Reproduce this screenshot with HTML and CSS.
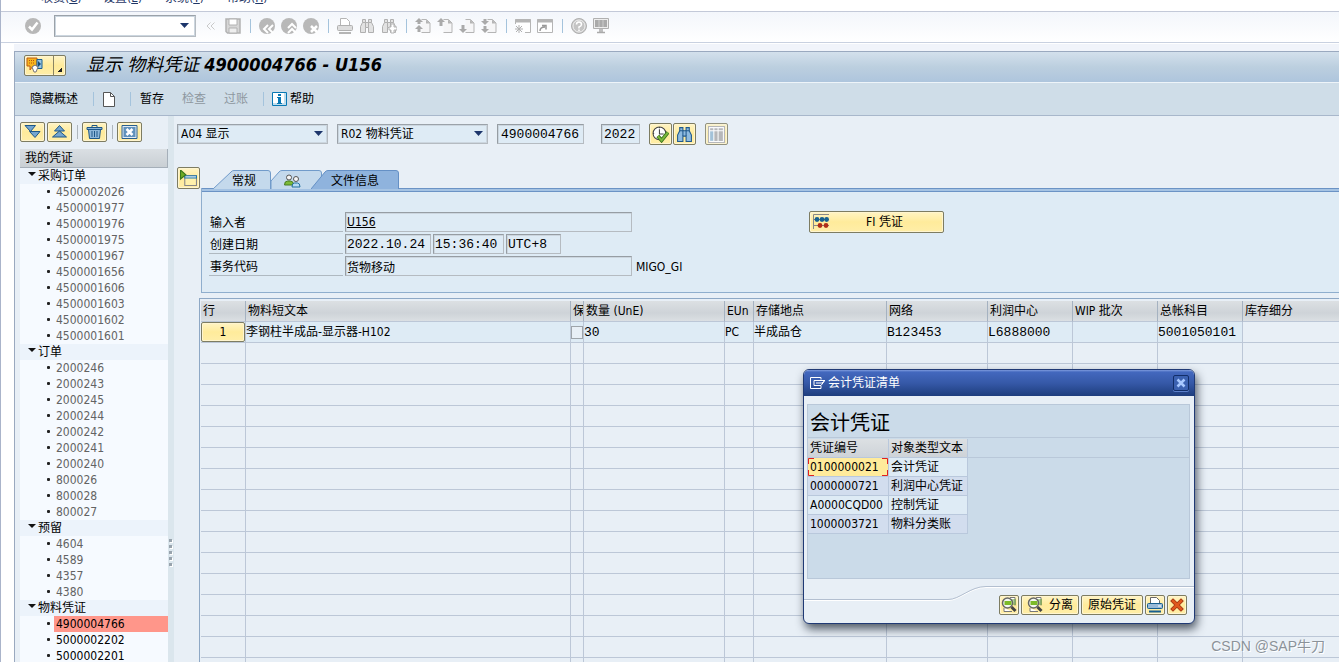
FILE: index.html
```html
<!DOCTYPE html>
<html lang="zh-CN">
<head>
<meta charset="utf-8">
<title>显示 物料凭证 4900004766 - U156</title>
<link rel="stylesheet" href="styles.css">
</head>
<body>
<svg class="sprite" aria-hidden="true">
  <symbol id="i-page" viewBox="0 0 16 16"><path d="M6.5 1.500h5l3.500 3.500v9.500h-8.500" fill="#f6f6f7" stroke="#b5b5b5"/><path d="M11 1.500v4h4z" fill="#b5b5b5"/></symbol>
  <symbol id="i-binoc" viewBox="0 0 16 16"><path d="M3.500 1.500h3v3h3v-3h3v3l2 4v6h-5v-5h-3v5h-5v-6l2-4z" fill="currentColor" stroke="var(--line)"/><path d="M3.500 4.500h3v5M12.500 4.500h-3v5" fill="none" stroke="var(--line)"/></symbol>
  <symbol id="i-lens" viewBox="0 0 16 16"><path d="M9 .5h5v8M3 11v3.500h8" fill="#fff" stroke="#777"/><path d="M10 3h5M10 5h5M10 7h5" stroke="#5b9b2b"/><circle cx="6.500" cy="6" r="5" fill="#f4f8f0" stroke="#666" stroke-width="1.500"/><path d="M3.500 4h7v4h-7z" fill="#7cba28"/><path d="M10.500 10l4 4" stroke="#444" stroke-width="3"/></symbol>
</svg>
<div class="frame">
<nav class="menu"><a href="#">收货(<u>G</u>)</a><a href="#">设置(<u>E</u>)</a><a href="#">系统(<u>Y</u>)</a><a href="#">帮助(<u>H</u>)</a></nav>
<div class="toolbar">
  <button class="tool ok" aria-label="确认"><svg viewBox="0 0 16 16"><circle cx="8" cy="8" r="8" fill="#b8b8b8"/><path d="M4 8.500l3 3 5.500-7" fill="none" stroke="#fff" stroke-width="2.500"/></svg></button>
  <div class="combo command"><input type="text" aria-label="命令"><svg class="arrow" viewBox="0 0 9 5"><path d="M0 0h9L4.500 5z"/></svg></div>
  <button class="tool" aria-label="折叠"><svg viewBox="0 0 16 16"><path d="M7.500 4.500L4 8l3.500 3.500M11.500 4.500L8 8l3.500 3.500" fill="none" stroke="#c9c9c9"/></svg></button>
  <button class="tool" aria-label="保存"><svg viewBox="0 0 16 16"><path d="M1 1h14v14H2.500L1 13.500z" fill="#d6d6d6" stroke="#b2b2b2" stroke-width="1.500"/><path d="M4 1h8v6H4z" fill="#fff" stroke="#b2b2b2"/><path d="M4 10h8v5H4z" fill="#eee" stroke="#b2b2b2"/></svg></button>
  <i class="sep"></i>
  <button class="tool" aria-label="返回"><svg viewBox="0 0 16 16"><circle cx="8" cy="8" r="8" fill="#b8b8b8"/><path d="M9 7l-4 4 4 4M14 7l-4 4 4 4" fill="none" stroke="#fff" stroke-width="2"/></svg></button>
  <button class="tool" aria-label="退出"><svg viewBox="0 0 16 16"><circle cx="8" cy="8" r="8" fill="#b8b8b8"/><path d="M7 10l4-4 4 4M7 15l4-4 4 4" fill="none" stroke="#fff" stroke-width="2"/></svg></button>
  <button class="tool" aria-label="取消"><svg viewBox="0 0 16 16"><circle cx="8" cy="8" r="8" fill="#b8b8b8"/><path d="M8 8l6 6M14 8l-6 6" stroke="#fff" stroke-width="2.500"/></svg></button>
  <i class="sep"></i>
  <button class="tool" aria-label="打印"><svg viewBox="0 0 16 16"><path d="M3.500 7V.5h6l3 3V7" fill="#fff" stroke="#b5b5b5"/><rect x=".5" y="7.500" width="15" height="5" rx="1" fill="#ddd" stroke="#b0b0b0"/><path d="M2 15h12" stroke="#b5b5b5" stroke-width="2"/></svg></button>
  <button class="tool find" aria-label="查找"><svg><use href="#i-binoc"/></svg></button>
  <button class="tool find" aria-label="继续查找"><svg viewBox="0 0 16 16"><use href="#i-binoc"/><path d="M10 6h3v3h3v3h-3v3h-3v-3H8V9h2z" fill="#fff" stroke="#b5b5b5"/></svg></button>
  <i class="sep"></i>
  <button class="tool" aria-label="第一页"><svg viewBox="0 0 16 16"><use href="#i-page"/><path d="M4 0l4 4H5.500v2H2.500V4H0zM4 7l4 4H5.500v3H2.500v-3H0z" fill="#aaa"/></svg></button>
  <button class="tool" aria-label="上一页"><svg viewBox="0 0 16 16"><use href="#i-page"/><path d="M4 0l4 4H5.500v4H2.500V4H0z" fill="#aaa"/></svg></button>
  <button class="tool" aria-label="下一页"><svg viewBox="0 0 16 16"><use href="#i-page"/><path d="M2.500 7h3v4H8l-4 4-4-4h2.500z" fill="#aaa"/></svg></button>
  <button class="tool" aria-label="最后一页"><svg viewBox="0 0 16 16"><use href="#i-page"/><path d="M2.500 1h3v2H8L4 7 0 3h2.500zM2.500 8h3v3H8l-4 4-4-4h2.500z" fill="#aaa"/></svg></button>
  <i class="sep"></i>
  <button class="tool" aria-label="新建会话"><svg viewBox="0 0 16 16"><path d="M.5 6V1.500h15v13H10" fill="#fff" stroke="#b5b5b5"/><path d="M0 3h16" stroke="#b5b5b5" stroke-width="3"/><path d="M4 7v8M0 11h8M1 8l6 6M7 8l-6 6" stroke="#b0b0b0"/></svg></button>
  <button class="tool" aria-label="创建快捷方式"><svg viewBox="0 0 16 16"><path d="M.5 1.500h15v13H.5z" fill="#fff" stroke="#b5b5b5"/><path d="M0 3h16" stroke="#b5b5b5" stroke-width="3"/><path d="M3 13q0-4 5-4M5 7.500h4v4" fill="none" stroke="#999" stroke-width="1.500"/></svg></button>
  <i class="sep"></i>
  <button class="tool" aria-label="帮助"><svg viewBox="0 0 16 16"><circle cx="8" cy="8" r="7.500" fill="#c4c4c4" stroke="#b0b0b0"/><circle cx="8" cy="8" r="6" fill="none" stroke="#eee"/><path d="M5.500 6.500Q5.500 4 8 4t2.500 2.500Q10.500 8 8 9v1.500M8 11.500V13" fill="none" stroke="#fff" stroke-width="1.500"/></svg></button>
  <button class="tool" aria-label="定制布局"><svg viewBox="0 0 16 16"><path d="M.5.5h15v10H.5z" fill="#eee" stroke="#b0b0b0"/><path d="M2 2h12v7H2z" fill="#aaa"/><path d="M6 2v7M10 2v7" stroke="#ccc"/><path d="M7 11v3M9 11v3M4 14.500h8" stroke="#aaa" stroke-width="1.500"/></svg></button>
</div>
<div class="window">
  <header class="title">
    <button class="gold services" aria-label="对象服务"><svg viewBox="0 0 18 16"><path d="M1 1h10v8H7l-3 4V9H1z" fill="#f7b51d" stroke="#bd5b17"/><path d="M3 3.500h6M3 6h6" stroke="#b4530f" stroke-dasharray="1 1"/><path d="M11 2.500h5v9h-5z" fill="#9bc5e1" stroke="#195f93"/><path d="M12 4l3 3-3 3z" fill="#164c79"/><path d="M6 10l3-2 3 2-2 5H8z" fill="#fff" stroke="#777"/></svg><span class="drop"></span></button>
    <h1>显示 物料凭证 <b>4900004766 - U156</b></h1>
  </header>
  <div class="appbar">
    <button class="flat">隐藏概述</button><i class="sep"></i>
    <button class="flat" aria-label="新建"><svg width="12" height="15" viewBox="0 0 12 15"><path d="M.5.500h7l4 4v10H.5z" fill="#fff" stroke="#555"/><path d="M7.500.500v4h4" fill="none" stroke="#555"/></svg></button><i class="sep"></i>
    <button class="flat hold">暂存</button><button class="flat" disabled>检查</button><button class="flat" disabled>过账</button><i class="sep"></i>
    <button class="flat help"><svg width="15" height="14" viewBox="0 0 15 14"><path d="M.5.500h14v13H.5z" fill="#fff" stroke="#0878b4"/><path d="M12 1h2v12H1v-2h11z" fill="#0878b4" opacity=".25"/><path d="M6 2h3v2H6zM5 5h4v6h1v1H5v-1h1V6H5z" fill="#0878b4"/></svg>帮助</button>
  </div>
  <div class="work">
    <aside class="side">
      <div class="sidebar-tools">
        <button class="gold" aria-label="全部展开"><svg viewBox="0 0 16 14"><path d="M.5.500h10.500l-5 6zM5 6.500h10.500l-5 6z" fill="#74a5cf" stroke="#1d5788"/></svg></button>
        <button class="gold" aria-label="全部折叠"><svg viewBox="0 0 16 14"><path d="M8 .500l5 5.500H3zM8 6l7 6H1z" fill="#74a5cf" stroke="#1d5788"/></svg></button>
        <i class="sep"></i>
        <button class="gold" aria-label="删除"><svg viewBox="0 0 16 14"><path d="M5.500 2V.5h5V2" fill="none" stroke="#1d5788"/><path d="M.5 2.500h15v2H.5zM2 4.500h12l-1 9H3z" fill="#8db7da" stroke="#1d5788"/><path d="M5.500 6v6M8 6v6M10.500 6v6" stroke="#1d5788"/></svg></button>
        <i class="sep"></i>
        <button class="gold" aria-label="关闭概述"><svg viewBox="0 0 16 14"><path d="M.5.500h15v13H.5z" fill="#e0ebf3" stroke="#285f8e"/><path d="M2 2h12v10H2z" fill="#5f91bc"/><path d="M5 4l6 6M11 4l-6 6" stroke="#fff" stroke-width="2.500"/></svg></button>
      </div>
      <h2 class="tree-head">我的凭证</h2>
      <ul class="tree">
        <li><span class="group">采购订单</span><ul><li><a href="#">4500002026</a></li><li><a href="#">4500001977</a></li><li><a href="#">4500001976</a></li><li><a href="#">4500001975</a></li><li><a href="#">4500001967</a></li><li><a href="#">4500001656</a></li><li><a href="#">4500001606</a></li><li><a href="#">4500001603</a></li><li><a href="#">4500001602</a></li><li><a href="#">4500001601</a></li></ul></li>
        <li><span class="group">订单</span><ul><li><a href="#">2000246</a></li><li><a href="#">2000243</a></li><li><a href="#">2000245</a></li><li><a href="#">2000244</a></li><li><a href="#">2000242</a></li><li><a href="#">2000241</a></li><li><a href="#">2000240</a></li><li><a href="#">800026</a></li><li><a href="#">800028</a></li><li><a href="#">800027</a></li></ul></li>
        <li><span class="group">预留</span><ul><li><a href="#">4604</a></li><li><a href="#">4589</a></li><li><a href="#">4357</a></li><li><a href="#">4380</a></li></ul></li>
        <li><span class="group">物料凭证</span><ul class="active"><li><a href="#" class="current">4900004766</a></li><li><a href="#">5000002202</a></li><li><a href="#">5000002201</a></li></ul></li>
      </ul>
    </aside>
    <div class="splitter"><i></i><i></i><i></i><i></i><i></i></div>
    <main>
      <div class="query">
        <div class="combo"><select aria-label="操作"><option>A04 显示</option></select><svg class="arrow" viewBox="0 0 9 5"><path d="M0 0h9L4.500 5z"/></svg></div>
        <div class="combo"><select aria-label="参考凭证"><option>R02 物料凭证</option></select><svg class="arrow" viewBox="0 0 9 5"><path d="M0 0h9L4.500 5z"/></svg></div>
        <input class="field mono number" aria-label="凭证编号" value="4900004766">
        <input class="field mono year" aria-label="年度" value="2022">
        <div class="query-tools">
        <button class="gold sq" aria-label="执行"><svg viewBox="0 0 16 16"><circle cx="7" cy="7" r="6" fill="#fff" stroke="#444"/><path d="M7 3v4.500h4M7 1v1M1 7h1M7 12v1" fill="none" stroke="#444"/><path d="M5.500 9.500l3.500 4 6-7.500" fill="none" stroke="#366d1b" stroke-width="3.500"/><path d="M5.500 9.500l3.500 4 6-7.500" fill="none" stroke="#7ab83a" stroke-width="2"/></svg></button>
        <button class="gold sq blue" aria-label="查找"><svg><use href="#i-binoc"/></svg></button>
        <button class="gold sq last" aria-label="布局"><svg viewBox="0 0 16 16"><path d="M.5.500h15v15H.5z" fill="#fff" stroke="#aaa"/><path d="M2 2h3v2H2zM6 2h3v2H6zM10 2h4v2h-4zM6 5h3v9H6zM10 5h4v9h-4z" fill="#aaa"/><path d="M2 5h3v9H2z" fill="#92b7d1"/></svg></button>
        </div>
      </div>
      <div class="detail">
        <button class="gold sq toggle" aria-label="明细"><svg viewBox="0 0 16 16"><path d="M4.500 5.500h11v9h-11z" fill="#fff1ab" stroke="#888"/><path d="M4 5h12v3H4z" fill="#1b74ab"/><path d="M5 6.500h10" stroke="#fff"/><path d="M.5 0l5 4.500-5 4z" fill="#6dac23" stroke="#39761b"/></svg></button>
        <section class="tabbox">
          <div class="tabs" role="tablist">
            <button role="tab" class="tab general"><svg viewBox="0 0 58 19"><path d="M0 19L18 2q1-1.500 3-1.500h34q2.500 0 2.500 2.500v16" fill="#c4d9ec" stroke="#719bca"/></svg><span>常规</span></button>
            <button role="tab" class="tab people" aria-label="业务伙伴"><svg viewBox="0 0 51 19"><path d="M0 19v-8l8-9q1-1.500 3-1.500h37q2.500 0 2.500 2.500v16" fill="#c4d9ec" stroke="#719bca"/></svg><span><svg width="17" height="14" viewBox="0 0 17 14"><circle cx="5" cy="3.500" r="2.500" fill="#f5f5f5" stroke="#555"/><path d="M.5 11q0-4 3-4h3q3 0 3 4z" fill="#7dbb38" stroke="#477c22"/><circle cx="12" cy="5" r="2.500" fill="#f5f5f5" stroke="#555"/><path d="M8 13q0-4 2.500-4h3q2.500 0 2.500 4z" fill="#b7dcf4" stroke="#22709f"/></svg></span></button>
            <button role="tab" class="tab doc" aria-selected="true"><svg viewBox="0 0 88 19"><path d="M0 19L14 2q1-1.500 3-1.500h68q2.500 0 2.500 2.500v16" fill="#8fb3dd" stroke="#6590c5"/></svg><span>文件信息</span></button>
          </div>
          <div class="panel">
            <div class="form">
              <div class="row"><label for="user">输入者</label><input id="user" class="field wide user" value="U156"></div>
              <div class="row"><label for="date">创建日期</label><input id="date" class="field mono date" value="2022.10.24"><input class="field mono time" aria-label="时间" value="15:36:40"><input class="field mono zone" aria-label="时区" value="UTC+8"></div>
              <div class="row"><label for="tcode">事务代码</label><input id="tcode" class="field wide" value="货物移动"><span class="code">MIGO_GI</span></div>
            </div>
            <button class="gold fi"><svg width="16" height="16" viewBox="0 0 16 16"><path d="M.5 15V.5H16M1 5.500h15M1 11.500h15" fill="none" stroke="#888"/><g fill="#16608f"><circle cx="4" cy="5.500" r="2.400"/><circle cx="9" cy="5.500" r="2.400"/><circle cx="13.600" cy="5.500" r="2.400"/></g><g fill="#b02f18"><circle cx="7" cy="11.500" r="2.400"/><circle cx="13" cy="11.500" r="2.400"/></g></svg><span>FI 凭证</span></button>
          </div>
        </section>
      </div>
      <div class="grid">
        <table>
          <colgroup><col class="w45"><col class="w325"><col class="w13"><col class="w141"><col class="w29"><col class="w133"><col class="w101"><col class="w85"><col class="w85"><col class="w85"><col></colgroup>
          <thead><tr><th>行</th><th>物料短文本</th><th>保</th><th>数量 (UnE)</th><th>EUn</th><th>存储地点</th><th>网络</th><th>利润中心</th><th>WIP 批次</th><th>总帐科目</th><th>库存细分</th></tr></thead>
          <tbody>
          <tr class="filled"><td><button class="gold line">1</button></td><td>李钢柱半成品-显示器-H102</td><td><input type="checkbox" aria-label="保留"></td><td class="mono">30</td><td>PC</td><td>半成品仓</td><td class="mono">B123453</td><td class="mono">L6888000</td><td></td><td class="mono">5001050101</td><td></td></tr>
          <tr><td><td><td><td><td><td><td><td><td><td><td></tr>
          <tr><td><td><td><td><td><td><td><td><td><td><td></tr>
          <tr><td><td><td><td><td><td><td><td><td><td><td></tr>
          <tr><td><td><td><td><td><td><td><td><td><td><td></tr>
          <tr><td><td><td><td><td><td><td><td><td><td><td></tr>
          <tr><td><td><td><td><td><td><td><td><td><td><td></tr>
          <tr><td><td><td><td><td><td><td><td><td><td><td></tr>
          <tr><td><td><td><td><td><td><td><td><td><td><td></tr>
          <tr><td><td><td><td><td><td><td><td><td><td><td></tr>
          <tr><td><td><td><td><td><td><td><td><td><td><td></tr>
          <tr><td><td><td><td><td><td><td><td><td><td><td></tr>
          <tr><td><td><td><td><td><td><td><td><td><td><td></tr>
          <tr><td><td><td><td><td><td><td><td><td><td><td></tr>
          <tr><td><td><td><td><td><td><td><td><td><td><td></tr>
          <tr><td><td><td><td><td><td><td><td><td><td><td></tr>
          <tr><td><td><td><td><td><td><td><td><td><td><td></tr>
          </tbody>
        </table>
      </div>
    </main>
  </div>
</div>
</div>
<section class="dialog" role="dialog" aria-labelledby="dlg">
  <header><svg width="16" height="12" viewBox="0 0 16 12"><path d="M11 .5H.5v11H11V9M11 .500v2M4 3.500h11L12 6h-3M4 3.500v5h7l3-4M6 6h3" fill="none" stroke="#fff"/></svg><h2 id="dlg">会计凭证清单</h2><button class="close" aria-label="关闭"><svg width="10" height="10" viewBox="0 0 10 10"><path d="M1.500 1.500l7 7M8.500 1.500l-7 7" stroke="#a8c8ff" stroke-width="2.500"/></svg></button></header>
  <div class="list">
    <h3>会计凭证</h3>
    <div class="hits">
    <table>
      <colgroup><col class="w81"><col class="w79"></colgroup>
      <thead><tr><th>凭证编号</th><th>对象类型文本</th></tr></thead>
      <tbody>
      <tr><td class="picked"><svg viewBox="0 0 80 18"><path d="M6 .5H.5V6M74 .500h5.500V6M.5 12v5.500H6M74 17.500h5.500V12" fill="none" stroke="#e02020"/></svg>0100000021</td><td>会计凭证</td></tr>
      <tr><td>0000000721</td><td>利润中心凭证</td></tr>
      <tr><td>A0000CQD00</td><td>控制凭证</td></tr>
      <tr><td>1000003721</td><td>物料分类账</td></tr>
      </tbody>
    </table>
    </div>
  </div>
  <footer>
    <svg class="curve" width="182" height="15" viewBox="0 0 182 15"><path d="M0 14.500h144c12 0 22-13 38-13" fill="none" stroke="#fff"/><path d="M0 13.500h144c12 0 22-13 38-13" fill="none" stroke="#b3bfd0"/></svg>
    <div class="actions">
      <button class="gold small" aria-label="选择"><svg width="16" height="16"><use href="#i-lens"/></svg></button>
      <button class="gold split"><svg width="16" height="16"><use href="#i-lens"/></svg>分离</button>
      <button class="gold original">原始凭证</button>
      <button class="gold small" aria-label="打印"><svg width="16" height="16" viewBox="0 0 16 16"><path d="M3.500 6V.5h6l3 3V6" fill="#fff" stroke="#666"/><rect x=".5" y="6.500" width="15" height="5" rx="1" fill="#98b9d8" stroke="#175e90"/><path d="M11 9h3" stroke="#fff"/><path d="M2 14.500h12" stroke="#175e90" stroke-width="2"/></svg></button>
      <button class="gold small" aria-label="取消"><svg width="16" height="16" viewBox="0 0 16 16"><path d="M4 4l8 8M12 4l-8 8" stroke="#9d3512" stroke-width="4" stroke-linecap="square"/><path d="M4 4l8 8M12 4l-8 8" stroke="#e0571c" stroke-width="2.500" stroke-linecap="square"/></svg></button>
    </div>
  </footer>
</section>
<div class="watermark">CSDN @SAP牛刀</div>
</body>
</html>
```
FILE: styles.css
```css
* { box-sizing: border-box; }
body {
  margin: 0; height: 100vh; overflow: hidden; position: relative; background: #fff; color: #000;
  font: 12px/16px "DejaVu Sans Condensed", "Noto Sans CJK SC", sans-serif;
}
h1, h2, h3, ul { margin: 0; padding: 0; font-weight: normal; font-size: 12px; }
ul { list-style: none; }
a { color: inherit; text-decoration: none; }
button, input, select { font: inherit; color: inherit; margin: 0; padding: 0; }
button { border: 0; background: none; white-space: nowrap; }
button svg { flex: none; }
svg { display: block; }
.sprite { position: absolute; width: 0; height: 0; }
.mono { font-family: "Liberation Mono", "Noto Sans CJK SC", monospace; font-size: 13px; }

.frame { height: 100%; display: flex; flex-direction: column; border-left: 1px solid #aab4ca; overflow: hidden; }
.menu { flex: none; height: 12px; padding: 0 0 5px 40px; display: flex; align-items: flex-end; gap: 20px; overflow: hidden; border-bottom: 1px solid #c3c9d8; color: #1f3666; }
.menu a { width: 42px; white-space: nowrap; }

.toolbar { flex: none; height: 31px; display: flex; align-items: center; padding: 0 0 2px 21px; background: linear-gradient(#f3f6fb, #fff); border-bottom: 1px solid #c9d1e0; }
.tool { width: 22px; height: 22px; display: flex; align-items: center; justify-content: center; }
.tool svg { width: 16px; height: 16px; }
.tool.ok { margin-right: 10px; }
.find { color: #e2e2e2; --line: #b0b0b0; }
.sep { flex: none; width: 12px; height: 14px; background: linear-gradient(#a4c3dc, #a4c3dc) center / 1px 100% no-repeat; }
.combo { position: relative; width: 151px; height: 20px; }
.combo select, .combo input { width: 100%; height: 100%; appearance: none; border: 1px solid #9ba2a9; border-right-color: #b5bbc1; border-bottom-color: #b5bbc1; border-radius: 0; background: #deebf5; padding: 0 3px; box-shadow: inset 0 0 0 1px #ccd6df; }
.arrow { position: absolute; right: 5px; top: 7px; width: 9px; height: 5px; fill: #1c356b; pointer-events: none; }
.combo.command { width: 142px; height: 22px; margin-right: 4px; }
.combo.command input { background: #fff; }
.combo.command .arrow { right: 7px; top: 8px; }

.window { flex: 1; min-height: 0; display: flex; flex-direction: column; margin: 8px 0 0 13px; border: solid #9aa9bf; border-width: 1px 0 0 1px; box-shadow: 0 -7px 0 #f1f4fa; }
.title { flex: none; height: 31px; display: flex; align-items: center; gap: 20px; padding: 0 0 4px 9px; background: linear-gradient(#d3e0ec, #bccfdf 50%, #aec5dd); border-bottom: 1px solid #eef4f9; }
.title h1 { font-size: 18px; line-height: 24px; font-style: italic; white-space: nowrap; }
.gold { display: flex; align-items: center; justify-content: center; border: 1px solid #7d7c62; border-radius: 2px; background: linear-gradient(#fff4c4, #ffeb9b 50%, #ffeea8); box-shadow: inset 0 0 0 1px #fff5cf; }
.services { width: 42px; height: 21px; justify-content: flex-start; padding-left: 1px; }
.services svg { width: 18px; height: 16px; }
.drop { margin-left: 9px; height: 19px; flex: 1; border-left: 1px solid #8a8463; background: linear-gradient(135deg, transparent 50%, #222 50%) right 3px bottom 3px / 5px 5px no-repeat; }
.appbar { flex: none; height: 33px; display: flex; align-items: center; padding-left: 15px; background: #cfdde8; border-bottom: 1px solid #a8b7cb; }
.appbar .sep { margin: 0 4px 0 9px; }
.flat { display: flex; align-items: center; gap: 3px; }
.flat:disabled { color: #8d979f; margin-left: 18px; }
.flat.help { margin-left: -1px; }

.work { flex: 1; min-height: 0; display: flex; background: #e8eff6; }
.side { flex: none; width: 153px; padding: 6px 0 0 5px; overflow: hidden; }
.sidebar-tools { display: flex; align-items: center; gap: 2px; height: 20px; }
.sidebar-tools .gold { width: 25px; height: 20px; }
.sidebar-tools svg { width: 17px; height: 14px; }
.sidebar-tools .sep { width: 6px; background-image: linear-gradient(#aeb6bd, #aeb6bd); }
.tree-head { margin-top: 7px; height: 19px; line-height: 18px; padding-left: 5px; background: linear-gradient(#dadfe3, #c9cfd4); border: solid #a5afb9; border-width: 0 1px 1px 0; }
.tree { background: #f6faff; }
.group { display: block; height: 16px; padding-left: 18px; background: #ecf3fb; position: relative; white-space: nowrap; }
.group::before { content: ""; position: absolute; left: 8px; top: 4px; border: solid transparent; border-width: 4px 4px 0; border-top-color: #111; }
.tree ul { color: #636363; }
.tree ul.active { color: #000; }
.tree ul li { display: flex; height: 16px; padding-left: 27px; }
.tree ul li::before { content: ""; flex: none; width: 3px; height: 3px; border-radius: 1px; background: #222; margin: 6px 4px 0 0; }
.tree ul a { flex: 1; padding-left: 2px; }
.current { background: #ff968a; }
.splitter { flex: none; width: 6px; padding: 423px 1px 0; display: flex; flex-direction: column; gap: 3px; background: #dbe6ed; }
.splitter i { width: 3px; height: 3px; background: #98a3ad; box-shadow: 1px 1px 0 #fff; }

main { flex: 1; min-width: 0; padding: 7px 0 0 3px; overflow: hidden; display: flex; flex-direction: column; }
.query { flex: none; display: flex; align-items: center; height: 22px; gap: 9px; }
.field { height: 20px; border: 1px solid #969da3; border-right-color: #b5bbc1; border-bottom-color: #b5bbc1; border-radius: 0; background: #deebf5; padding: 0 1px; box-shadow: inset 1px 1px 0 #ccd6df; }
.field.number { width: 87px; padding: 0 3px; }
.field.year { width: 39px; padding: 0 2px; margin-left: 8px; }
.query-tools { display: flex; gap: 1px; }
.sq { flex: none; width: 23px; height: 22px; }
.sq svg { width: 17px; height: 17px; }
.sq.last { margin-left: 8px; opacity: .8; }
.blue { color: #8ebbe0; --line: #20598c; }
.detail { flex: none; display: flex; margin-top: 22px; }
.toggle { margin-right: 1px; }
.tabbox { flex: 1; min-width: 0; margin-top: 3px; }
.tabs { display: flex; height: 18px; padding-left: 12px; }
.tab { position: relative; height: 18px; }
.tab > svg { position: absolute; left: 0; top: 0; width: 100%; height: 19px; }
.tab span { position: relative; display: flex; justify-content: center; line-height: 22px; }
.general { width: 58px; padding-left: 4px; }
.people { width: 51px; }
.people span { padding: 3px 8px 0 0; }
.doc { width: 88px; margin-left: -11px; }
.panel { display: flex; height: 105px; background: linear-gradient(#6b93c5, #6b93c5) 0 0 / 100% 1px no-repeat, linear-gradient(#6b93c5, #6b93c5) 0 3px / 100% 1px no-repeat, linear-gradient(#a5c3e3, #a5c3e3) 0 0 / 100% 4px no-repeat, #deebf5; border: solid #8faecd; border-width: 0 0 1px 1px; }
.form { width: 607px; flex: none; padding: 24px 0 0 7px; display: flex; flex-direction: column; gap: 2px; }
.row { display: flex; gap: 2px; height: 20px; }
.row label { width: 134px; padding-left: 1px; line-height: 22px; border-bottom: 1px solid #afb9c1; }
.wide { width: 287px; }
.user { text-decoration: underline; }
.date { width: 86px; }
.time { width: 71px; }
.zone { width: 55px; }
.code { line-height: 22px; padding-left: 2px; }
.fi { width: 135px; height: 22px; margin-top: 23px; padding: 0 3px; }
.fi span { flex: 1; }

.grid { flex: none; margin: 5px 0 0 22px; border: solid #8ea8c5; border-width: 1px 0 0 1px; padding: 2px 0 0 1px; overflow: hidden; }
table { border-collapse: separate; border-spacing: 0; table-layout: fixed; }
.grid table { width: 100%; }
.grid th, .grid td { height: 21px; padding: 0; line-height: 20px; text-align: left; font-weight: normal; white-space: nowrap; overflow: hidden; border: solid #bcc7d7; border-width: 0 1px 1px 0; }
.grid th { padding: 0 2px; background: linear-gradient(#dce0e3, #ced3d8 60%, #dbdfe3); border-right-color: #a5b2c1; }
.grid tr > :last-child { border-right-width: 0; }
.grid td.mono { line-height: 19px; }
.grid .filled td { background: #deebf5; }
.grid .filled td:last-child { background: #e8eff6; }
.line { width: 44px; height: 20px; }
.grid input { display: block; appearance: none; width: 12px; height: 13px; border: 1px solid #9ea4aa; background: #e8eff6; }
.w45 { width: 45px; } .w325 { width: 325px; } .w13 { width: 13px; } .w141 { width: 141px; } .w29 { width: 29px; }
.w133 { width: 133px; } .w101 { width: 101px; } .w85 { width: 85px; } .w81 { width: 81px; } .w79 { width: 79px; }

.dialog { position: absolute; left: 803px; top: 369px; width: 392px; border: 1px solid #203a75; border-radius: 6px; background: #e8eff6; box-shadow: 2px 5px 10px rgba(30, 40, 55, .75); }
.dialog header { display: flex; align-items: center; height: 26px; padding: 0 5px 0 6px; gap: 2px; color: #fff; background: linear-gradient(#7d9bdd 0, #4368be 8%, #3659a8 50%, #1e3d7d); border-radius: 5px 5px 0 0; }
.dialog header h2 { flex: 1; }
.close { width: 16px; height: 16px; display: flex; align-items: center; justify-content: center; border: 1px solid #122e69; border-radius: 2px; background: #3b61b1; box-shadow: 0 1px 0 #5c80cb; }
.list { margin: 8px 4px 0 3px; height: 175px; background: #cbdbe9; border: 1px solid #b9c8d9; }
.list h3 { height: 33px; padding: 2px 2px 0; font-size: 20px; line-height: 32px; border-bottom: 1px solid #b9c8d9; }
.hits { padding-top: 1px; background: linear-gradient(#b9c8d9, #b9c8d9) 0 19px / 100% 1px no-repeat; }
.list table { width: 160px; }
.list th, .list td { height: 19px; padding: 0 2px; line-height: 18px; text-align: left; font-weight: normal; white-space: nowrap; border: solid #b9c8dc; border-width: 0 1px 1px 0; background: #d2ddee; }
.list tr:nth-child(odd) td { background: #deebf5; }
.list th { background: linear-gradient(#dce0e3, #ced3d8); }
.list tr .picked.picked { position: relative; background: #ffeb9b; }
.picked svg { position: absolute; left: 0; top: 0; width: 80px; height: 18px; }
footer { display: flex; margin-top: 7px; height: 37px; }
.curve { flex: none; }
.actions { flex: 1; display: flex; justify-content: flex-end; gap: 2px; padding: 8px 7px 0 0; border-top: 1px solid #b3bfd0; box-shadow: inset 0 1px 0 #fff; }
.small, .split, .original { height: 20px; }
.small { width: 20px; }
.split { width: 58px; gap: 6px; }
.original { width: 62px; }
.watermark { position: absolute; right: 14px; bottom: 6px; font: 14px/20px "Liberation Sans", "Noto Sans CJK SC", sans-serif; color: #8b9299; text-shadow: 1px 1px 0 #fff; }
```
